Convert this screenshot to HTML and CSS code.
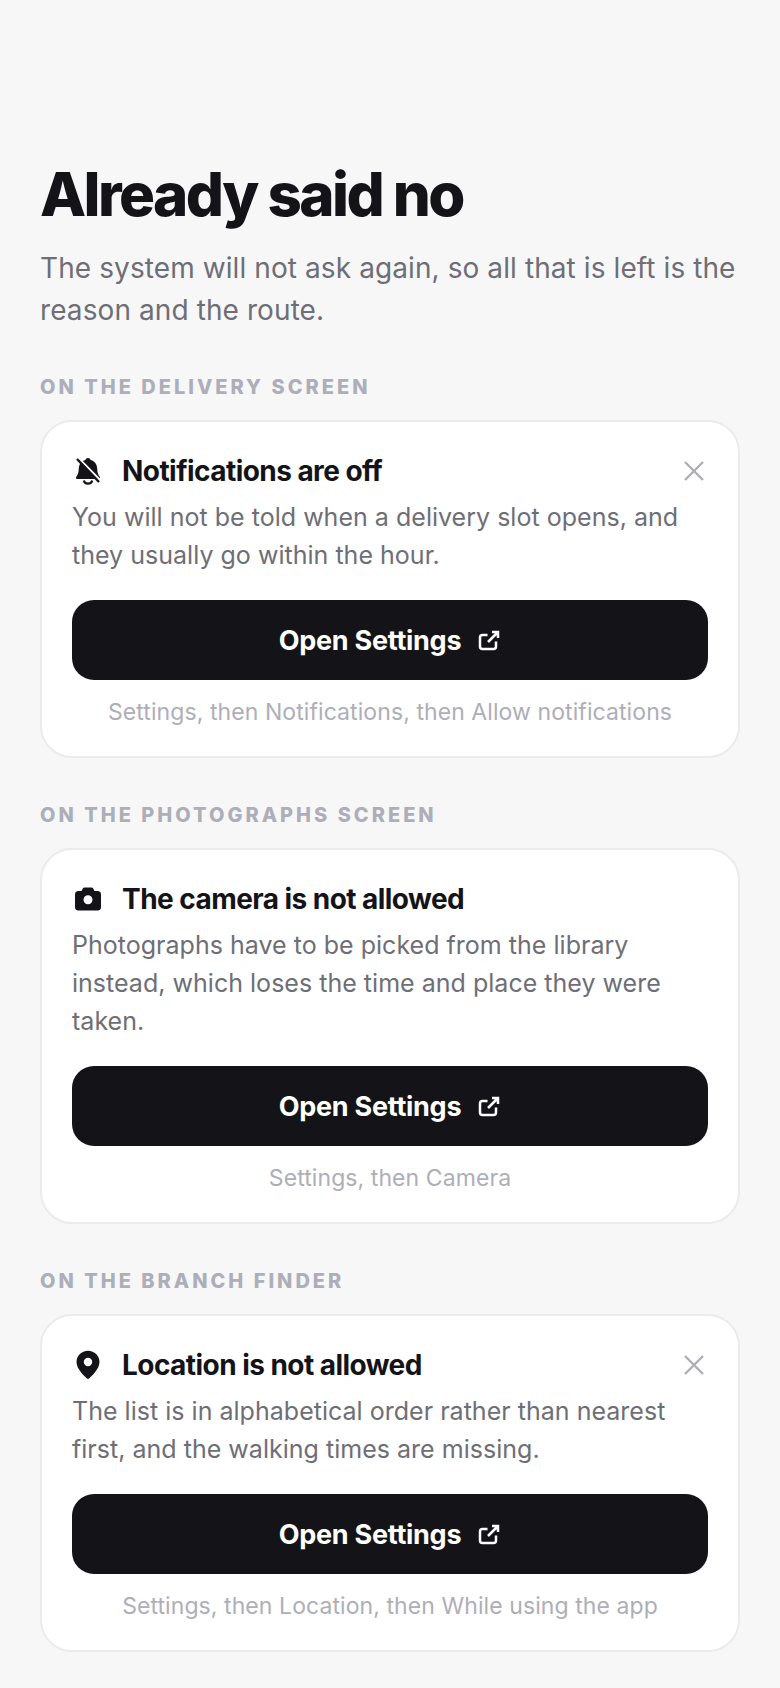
FILE: index.html
```html
<!DOCTYPE html>
<html lang="en">
<head>
    <meta charset="UTF-8">
    <meta name="viewport" content="width=device-width, initial-scale=1.0">
    <title>Already said no</title>
    <link rel="stylesheet" href="styles.css">
</head>
<body>
    <main class="page">
        <h1>Already said no</h1>
        <p class="intro">The system will not ask again, so all that is left is the reason and the route.</p>

        <h2 class="section-label">On the delivery screen</h2>
        <section class="card">
            <div class="card-head">
                <svg class="head-icon" viewBox="0 0 32 32">
                    <path d="M16 3c-1.300 0-2.300.8-2.600 1.900C9 6 6.900 9.500 6.800 13.500c-.1 3.800-.8 6-2 7.600-.6.800-.8 1.300-.8 1.800 0 .7.500 1.100 1.200 1.100h21.600c.7 0 1.200-.4 1.200-1.100 0-.5-.2-1-.8-1.800-1.200-1.600-1.900-3.800-2-7.600C25.100 9.500 23 6 18.600 4.900 18.300 3.800 17.300 3 16 3z"/>
                    <path class="clapper" d="M11.800 25.500c.4 2 2.200 3.200 4.200 3.200s3.800-1.200 4.200-3.200"/>
                    <path class="slash-gap" d="M7 3.500 28.500 25.500"/>
                    <path class="slash" d="M5 4 27 27"/>
                </svg>
                <h3>Notifications are off</h3>
                <svg class="close-icon" viewBox="0 0 28 28"><path d="M5 5 23 23M23 5 5 23"/></svg>
            </div>
            <p class="card-text">You will not be told when a delivery slot opens, and they usually go within the hour.</p>
            <button class="settings-btn" type="button">Open Settings
                <svg class="open-icon" viewBox="0 0 24 24"><path d="M10.500 6H5.500A2.500 2.500 0 0 0 3 8.500v9A2.500 2.500 0 0 0 5.500 20h11a2.500 2.500 0 0 0 2.500-2.500v-5M11 13 21 3M15 3h6v6"/></svg>
            </button>
            <p class="hint">Settings, then Notifications, then Allow notifications</p>
        </section>

        <h2 class="section-label">On the photographs screen</h2>
        <section class="card">
            <div class="card-head">
                <svg class="head-icon" viewBox="0 0 32 32"><path fill-rule="evenodd" d="M12.500 4.500h7c.8 0 1.300.4 1.700 1L22.500 8h3A3.500 3.500 0 0 1 29 11.500V24a3.500 3.500 0 0 1-3.500 3.500h-19A3.500 3.500 0 0 1 3 24V11.500A3.500 3.500 0 0 1 6.500 8h3l1.300-2.500c.4-.6.900-1 1.700-1zM16 12.300a4.500 4.500 0 1 0 0 9 4.500 4.500 0 0 0 0-9z"/></svg>
                <h3>The camera is not allowed</h3>
            </div>
            <p class="card-text">Photographs have to be picked from the library instead, which loses the time and place they were taken.</p>
            <button class="settings-btn" type="button">Open Settings
                <svg class="open-icon" viewBox="0 0 24 24"><path d="M10.500 6H5.500A2.500 2.500 0 0 0 3 8.500v9A2.500 2.500 0 0 0 5.500 20h11a2.500 2.500 0 0 0 2.500-2.500v-5M11 13 21 3M15 3h6v6"/></svg>
            </button>
            <p class="hint">Settings, then Camera</p>
        </section>

        <h2 class="section-label">On the branch finder</h2>
        <section class="card">
            <div class="card-head">
                <svg class="head-icon" viewBox="0 0 32 32"><path fill-rule="evenodd" d="M16 1.800C9.600 1.800 4.500 6.800 4.500 13c0 7 7.600 13.800 10.400 16.500.6.500 1.600.5 2.200 0C19.900 26.800 27.500 20 27.500 13 27.500 6.800 22.400 1.800 16 1.800zM16 8.800a4.200 4.200 0 1 0 0 8.400 4.200 4.200 0 0 0 0-8.400z"/></svg>
                <h3>Location is not allowed</h3>
                <svg class="close-icon" viewBox="0 0 28 28"><path d="M5 5 23 23M23 5 5 23"/></svg>
            </div>
            <p class="card-text">The list is in alphabetical order rather than nearest first, and the walking times are missing.</p>
            <button class="settings-btn" type="button">Open Settings
                <svg class="open-icon" viewBox="0 0 24 24"><path d="M10.500 6H5.500A2.500 2.500 0 0 0 3 8.500v9A2.500 2.500 0 0 0 5.500 20h11a2.500 2.500 0 0 0 2.500-2.500v-5M11 13 21 3M15 3h6v6"/></svg>
            </button>
            <p class="hint">Settings, then Location, then While using the app</p>
        </section>
    </main>
</body>
</html>
```
FILE: styles.css
```css
body, h1, h2, h3, p {
    margin: 0;
    padding: 0;
}

body {
    font-family: Inter, Arial, sans-serif;
    background-color: #f7f7f8;
    color: #141418;
}

.page {
    padding: 159px 40px 36px;
}

h1 {
    font-size: 60px;
    line-height: 70px;
    font-weight: 800;
    letter-spacing: -2.55px;
}

.intro {
    margin-top: 18px;
    font-size: 28px;
    line-height: 42px;
    letter-spacing: 0.09px;
    color: #6e6e76;
}

.section-label {
    margin-top: 43px;
    margin-bottom: 20px;
    font-size: 20px;
    line-height: 26px;
    font-weight: 800;
    letter-spacing: 3px;
    text-transform: uppercase;
    color: #aeaeb8;
}

.card {
    background: #fff;
    border: 2px solid #ebebee;
    border-radius: 32px;
    padding: 29px 30px 28px;
    margin-bottom: 44px;
}

.card:last-child {
    margin-bottom: 0;
}

.card-head {
    display: flex;
    align-items: center;
    gap: 18px;
}

.card-head h3 {
    flex: 1;
    font-size: 28px;
    line-height: 40px;
    font-weight: 700;
    letter-spacing: -0.55px;
}

.head-icon {
    width: 32px;
    height: 32px;
    fill: #141418;
}

.clapper {
    fill: none;
    stroke: #141418;
    stroke-width: 2.200;
}

.slash-gap {
    fill: none;
    stroke: #fff;
    stroke-width: 2;
}

.slash {
    fill: none;
    stroke: #141418;
    stroke-width: 2.400;
}

.close-icon {
    width: 28px;
    height: 28px;
    fill: none;
    stroke: #aeaeb8;
    stroke-width: 2.400;
}

.card-text {
    margin-top: 7px;
    font-size: 25px;
    line-height: 38px;
    letter-spacing: 0.02px;
    color: #6e6e76;
}

.settings-btn {
    display: flex;
    justify-content: center;
    align-items: center;
    gap: 16px;
    width: 100%;
    height: 80px;
    margin-top: 26px;
    padding-top: 1px;
    border: none;
    border-radius: 22px;
    background-color: #141418;
    color: #fff;
    font-family: inherit;
    font-size: 27px;
    font-weight: 700;
    letter-spacing: -0.27px;
}

.open-icon {
    width: 24px;
    height: 24px;
    margin-top: 2px;
    fill: none;
    stroke: #fff;
    stroke-width: 2.500;
}

.hint {
    margin-top: 16px;
    font-size: 23px;
    line-height: 32px;
    letter-spacing: 0.08px;
    text-align: center;
    color: #aeaeb8;
}
```
